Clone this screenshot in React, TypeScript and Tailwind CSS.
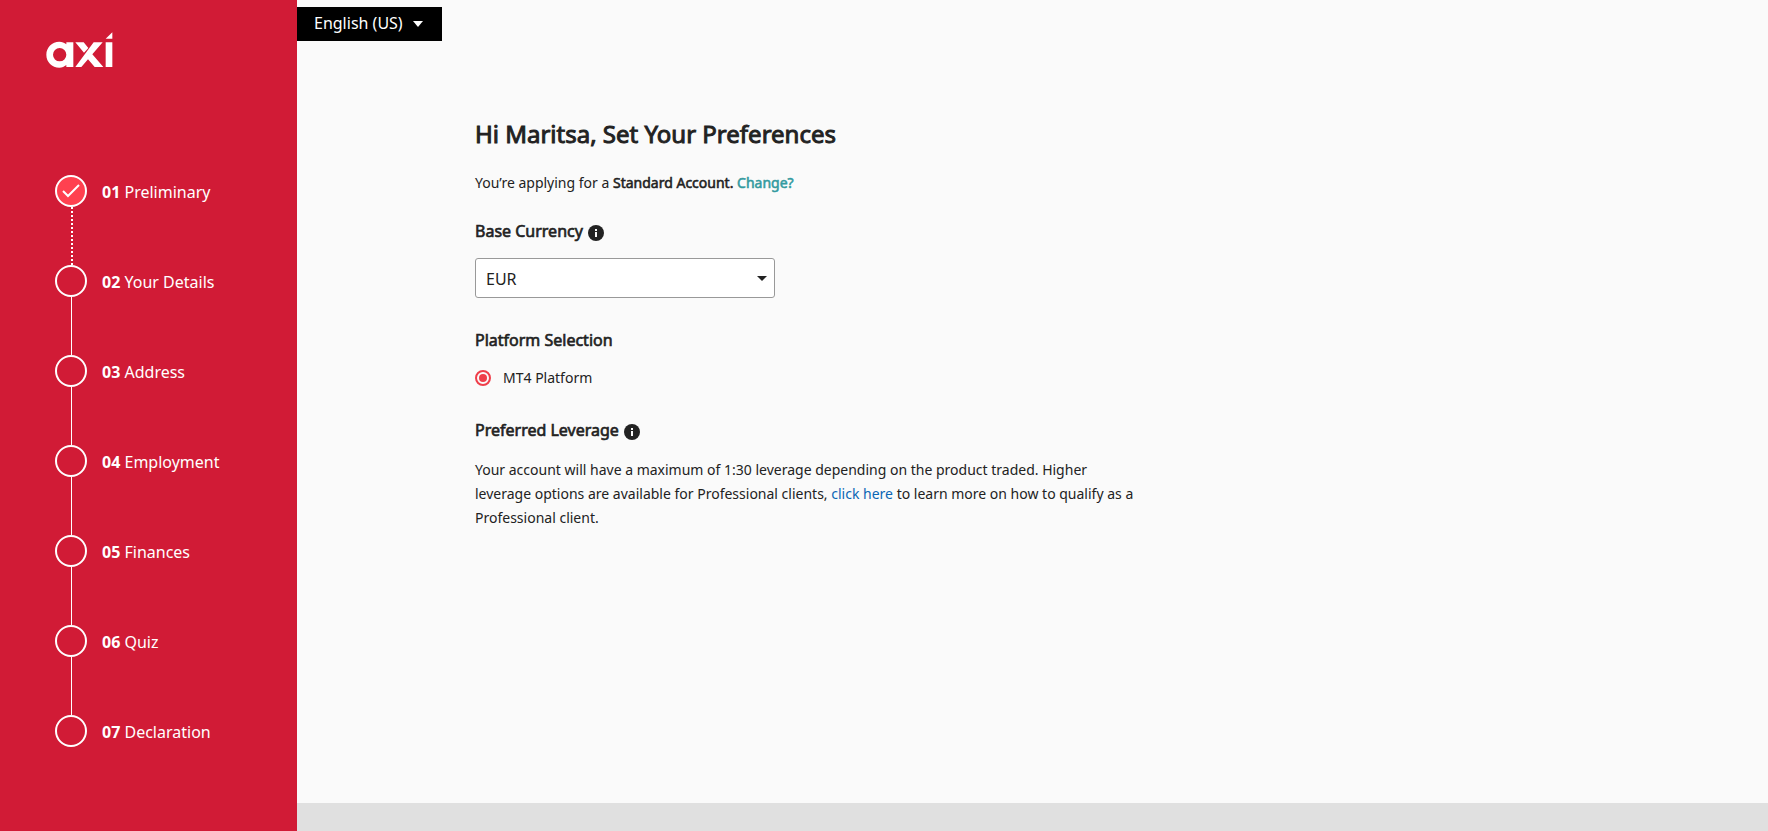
import {useState} from "react";

const steps = [
  {number: "01", label: "Preliminary", done: true},
  {number: "02", label: "Your Details", done: false},
  {number: "03", label: "Address", done: false},
  {number: "04", label: "Employment", done: false},
  {number: "05", label: "Finances", done: false},
  {number: "06", label: "Quiz", done: false},
  {number: "07", label: "Declaration", done: false},
];

// Regular cut with a thin outline, keeps the regular letter widths
const strong = "font-normal [-webkit-text-stroke:0.04em]";

const Logo = () => (
  <svg className="block h-[36px] w-[67px]" viewBox="0 0 201 108" fill="#fff" role="img" aria-label="axi">
    <path
      fillRule="evenodd"
      d="M61 31h21v74H61v-6c-6 5-13 8-21 8C18 107 1 90 1 68s17-39 39-39c8 0 15 3 21 8zM41 48a20 20 0 1 0 0 40 20 20 0 0 0 0-40z"
    />
    <path d="M88 31h25l14 17-13 14zM143 31h27l-31 36 33 38h-26l-20-23-20 23H88z" />
    <path d="M179 31h20v74h-20zM179 20L199 1v19z" />
  </svg>
);

const InfoIcon = () => (
  <svg className="mt-[3px] size-4" viewBox="0 0 16 16" aria-hidden="true">
    <circle cx="8" cy="8" r="8" fill="#222" />
    <path d="M7 4h2v2H7zM7 7h2v5H7z" fill="#fafafa" />
  </svg>
);

const Step = ({number, label, done, last}: {number: string; label: string; done: boolean; last: boolean}) => (
  <li className="flex gap-[15px]">
    <div className="w-8">
      <span
        className={`flex size-8 items-center justify-center rounded-full border-2 border-white ${
          done ? "bg-[#ff4150]" : ""
        }`}
      >
        {done && (
          <svg className="h-[14px] w-[18px]" viewBox="0 0 18 14" fill="none" stroke="#fff" strokeWidth="2">
            <path d="M1 7l5 5L17 1" />
          </svg>
        )}
      </span>
      {!last && (
        <span
          className={`ml-4 block h-[58px] border-white ${done ? "border-l-2 border-dotted" : "border-l"}`}
        />
      )}
    </div>
    <span className="h-8 text-base leading-[34px]">
      <b className="font-bold">{number}</b> {label}
    </span>
  </li>
);

export default function App() {
  const [language, setLanguage] = useState("en-US");
  const [currency, setCurrency] = useState("EUR");

  return (
    <div className="flex min-h-screen bg-[#fafafa] font-['Noto_Sans',sans-serif] text-[#222]">
      <aside className="w-[297px] shrink-0 bg-[#d11b36] pt-8 text-white">
        <a href="#" className="ml-[46px] inline-block align-top">
          <Logo />
        </a>
        <ol className="mt-[107px] ml-[55px]">
          {steps.map((step, i) => (
            <Step key={step.number} {...step} last={i === steps.length - 1} />
          ))}
        </ol>
      </aside>

      <div className="flex min-w-0 flex-1 flex-col">
        <header className="pt-[7px]">
          <div className="inline-grid h-[34px] w-[145px] items-center bg-black align-top text-white">
            <select
              aria-label="Language"
              className="col-start-1 row-start-1 h-full w-full appearance-none pb-[2px] pl-[17px] text-base"
              value={language}
              onChange={(e) => setLanguage(e.target.value)}
            >
              <option value="en-US">English (US)</option>
            </select>
            <svg
              className="pointer-events-none col-start-1 row-start-1 mr-[19px] h-[6px] w-[10px] justify-self-end"
              viewBox="0 0 10 6"
              fill="#fff"
            >
              <path d="M0 0h10L5 6z" />
            </svg>
          </div>
        </header>

        <main className="flex-1 px-[178px] pt-[77px]">
          <h1 className={`text-2xl leading-8 ${strong}`}>Hi Maritsa, Set Your Preferences</h1>
          <p className="mt-[21px] text-sm leading-6">
            You’re applying for a <b className={strong}>Standard Account.</b>{" "}
            <a href="#" className={`text-[#339a9f] ${strong}`}>
              Change?
            </a>
          </p>

          <div className="mt-6 flex items-center gap-[5px]">
            <label htmlFor="currency" className={`text-base leading-6 ${strong}`}>
              Base Currency
            </label>
            <InfoIcon />
          </div>
          <div className="mt-[15px] grid w-[300px] items-center">
            <select
              id="currency"
              className="col-start-1 row-start-1 h-10 appearance-none rounded-[3px] border border-[#999] bg-white pt-[2px] pl-[10px] text-base"
              value={currency}
              onChange={(e) => setCurrency(e.target.value)}
            >
              <option>EUR</option>
            </select>
            <svg
              className="pointer-events-none col-start-1 row-start-1 mr-2 h-[5px] w-[10px] justify-self-end"
              viewBox="0 0 10 5"
              fill="#222"
            >
              <path d="M0 0h10L5 5z" />
            </svg>
          </div>

          <h2 className={`mt-[30px] text-base leading-6 ${strong}`}>Platform Selection</h2>
          <label className="mt-[14px] flex items-center gap-3 text-sm leading-6">
            <input
              type="radio"
              name="platform"
              defaultChecked
              className="size-4 appearance-none rounded-full border-2 border-[#ef3e4a] bg-[#ef3e4a] bg-clip-content p-[2px]"
            />
            MT4 Platform
          </label>

          <div className="mt-7 flex items-center gap-[5px]">
            <h2 className={`text-base leading-6 ${strong}`}>Preferred Leverage</h2>
            <InfoIcon />
          </div>
          <p className="mt-4 max-w-[664px] text-sm leading-6">
            Your account will have a maximum of 1:30 leverage depending on the product traded. Higher leverage options
            are available for Professional clients,{" "}
            <a href="#" className="text-[#0a66b5]">
              click here
            </a>{" "}
            to learn more on how to qualify as a Professional client.
          </p>
        </main>

        <footer className="h-7 bg-[#e0e0e0]" />
      </div>
    </div>
  );
}
